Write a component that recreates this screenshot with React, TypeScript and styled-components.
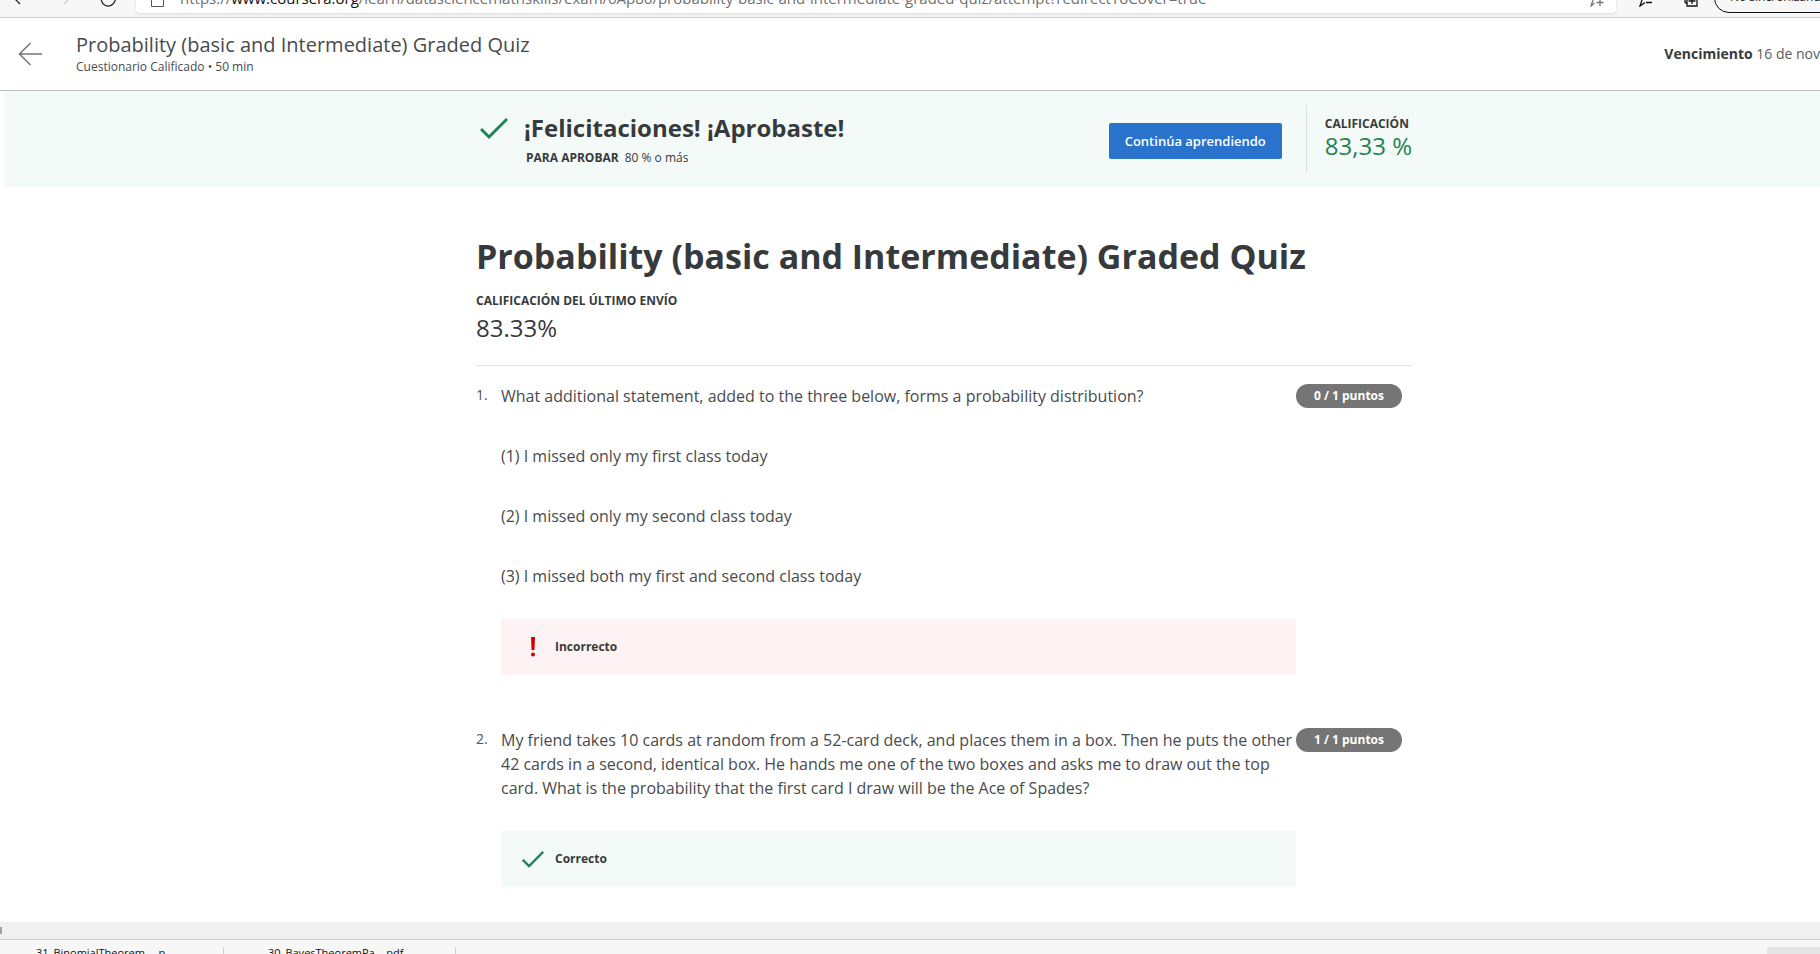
import React from "react";
import styled, { createGlobalStyle } from "styled-components";

const GlobalStyle = createGlobalStyle`
  *, *::before, *::after { box-sizing: border-box; }
  html, body, #root { height: 100%; }
  body {
    margin: 0;
    background: #fff;
    color: #373a3c;
    font-family: "Open Sans", "Noto Sans", sans-serif;
    font-size: 16px;
    overflow: hidden;
  }
  h1, h2, p, ol { margin: 0; padding: 0; }
  button { font: inherit; cursor: pointer; }
`;

const Shell = styled.div`
  display: flex;
  flex-direction: column;
  height: 100%;
  overflow: hidden;
`;

const BrowserBar = styled.div`
  flex: none;
  display: flex;
  align-items: flex-end;
  height: 18px;
  background: #f7f7f7;
  border-bottom: 1px solid #cfcfcf;
  overflow: hidden;
`;

const BrowserButtons = styled.div`
  flex: none;
  display: grid;
  grid-template-columns: 50px 38px auto;
  width: 136px;
  padding: 0 0 10px 12px;
`;

const BarButton = styled.button<{ $tone?: string }>`
  flex: none;
  display: flex;
  padding: 0;
  border: 0;
  background: none;
  color: ${(p) => p.$tone ?? "#222"};
`;

const Address = styled.div`
  flex: 1;
  display: flex;
  align-items: flex-end;
  gap: 16px;
  height: 34px;
  margin-bottom: 4px;
  padding: 0 12px 6px 15px;
  background: #fff;
  border-radius: 4px;
  box-shadow: 0 1px 3px rgba(0, 0, 0, 0.12);
  white-space: nowrap;
  color: #707070;
`;

const Url = styled.span`
  flex: 1;
  font-size: 15px;
  line-height: 18px;
  b { font-weight: 400; color: #111; }
`;

const BarActions = styled.div`
  flex: none;
  display: flex;
  align-items: flex-end;
  width: 204px;
  padding: 0 0 10px 22px;
  gap: 30px;
  overflow: hidden;
`;

const SyncButton = styled.button`
  flex: none;
  width: 160px;
  height: 30px;
  margin: 0 0 -6px -16px;
  padding: 0 0 2px 15px;
  border: 1px solid #111;
  border-radius: 15px;
  background: #f7f7f7;
  color: #222;
  text-align: left;
  font-size: 12px;
  line-height: 18px;
`;

const Header = styled.header`
  flex: none;
  display: flex;
  align-items: center;
  height: 73px;
  padding-left: 18px;
  border-bottom: 1px solid #bdbdbd;
`;

const BackLink = styled.a`
  display: flex;
  width: 58px;
  color: #757575;
`;

const HeaderTitles = styled.div`
  flex: 1;
  padding-top: 2px;
  color: #484b4d;
`;

const HeaderTitle = styled.p`
  font-size: 20px;
  line-height: 24px;
`;

const HeaderMeta = styled.p`
  font-size: 12px;
  line-height: 20px;
`;

const DueDate = styled.p`
  font-size: 14px;
  line-height: 20px;
  white-space: nowrap;
  color: #5a5c5e;
  b { color: #373a3c; }
`;

/* The quiz is centred on a page 64px wider than the visible area. */
const Banner = styled.section`
  flex: none;
  height: 96px;
  margin-left: 4px;
  padding-left: 64px;
  background: #f4faf8;
`;

const Column = styled.div`
  width: 100%;
  max-width: 936px;
  margin: 0 auto;
`;

const BannerRow = styled(Column)`
  display: flex;
  align-items: center;
  height: 96px;
`;

const BannerText = styled.div`
  flex: 1;
  display: grid;
  grid-template-columns: 44px 1fr;
  align-items: center;
  padding: 2px 0 0 4px;
`;

const BannerTitle = styled.h2`
  font-size: 24px;
  line-height: 36px;
`;

const BannerNote = styled.p`
  grid-column: 2;
  padding-left: 2px;
  font-size: 12px;
  line-height: 24px;
  b { margin-right: 6px; }
`;

const PrimaryButton = styled.button`
  height: 36px;
  padding: 0 16px;
  margin: 4px 24px 0 0;
  border: 0;
  border-radius: 2px;
  background: #2a73cc;
  color: #fff;
  font-size: 13px;
  font-weight: 600;
`;

const Grade = styled.div`
  display: flex;
  flex-direction: column;
  justify-content: center;
  height: 68px;
  padding: 0 0 6px 18px;
  border-left: 1px solid #dcdfde;
`;

const Label = styled.p`
  font-size: 12px;
  font-weight: 700;
  line-height: 18px;
`;

const GradeValue = styled.p`
  font-size: 24px;
  line-height: 25px;
  color: #1f8354;
`;

const Main = styled.main`
  flex: 1;
  min-height: 0;
  padding-left: 68px;
  overflow: hidden;
`;

const QuizTitle = styled.h1`
  padding-top: 47px;
  font-size: 34px;
  line-height: 44px;
`;

const LastGrade = styled.div`
  padding: 14px 0 19px;
  border-bottom: 1px solid #e1e1e1;
`;

const LastValue = styled.p`
  font-size: 24px;
  line-height: 36px;
`;

const Questions = styled.ol`
  list-style: none;
`;

const Question = styled.li`
  display: flex;
  align-items: flex-start;
  padding: 18px 10px 35px 0;
`;

const Num = styled.span`
  width: 25px;
  font-size: 14px;
  line-height: 22px;
  color: #505355;
`;

const Body = styled.div`
  flex: 1;
`;

const Prompt = styled.p`
  line-height: 24px;
  color: #484b4d;
  & + & { margin-top: 36px; }
`;

const Result = styled.div<{ $ok?: boolean }>`
  display: flex;
  align-items: center;
  gap: 11px;
  height: 56px;
  margin-top: 31px;
  padding: 0 0 1px 21px;
  background: ${(p) => (p.$ok ? "#f4faf8" : "#fef3f4")};
  font-size: 12px;
  font-weight: 700;
`;

const Points = styled.span`
  width: 106px;
  border-radius: 12px;
  background: #757575;
  color: #fff;
  text-align: center;
  font-size: 12px;
  font-weight: 700;
  line-height: 24px;
`;

const ScrollTrack = styled.div`
  flex: none;
  display: flex;
  align-items: center;
  height: 17px;
  background: #f0f0f0;
`;

const ScrollArrow = styled.span`
  width: 2px;
  height: 7px;
  background: #a0a0a0;
`;

const Downloads = styled.footer`
  flex: none;
  display: flex;
  align-items: flex-start;
  height: 15px;
  padding-top: 7px;
  border-top: 1px solid #cfcfcf;
  background: #f7f7f7;
  overflow: hidden;
`;

const Download = styled.button`
  flex: none;
  display: flex;
  width: 232px;
  height: 40px;
  padding: 0 0 0 44px;
  border: 0;
  border-right: 1px solid #cfcfcf;
  background: none;
  text-align: left;
  color: #111;
  font-size: 11px;
  line-height: 12px;
  &:first-child { width: 224px; padding-left: 36px; }
`;

const ShowMore = styled.button`
  width: 53px;
  height: 32px;
  margin-left: auto;
  border: 0;
  border-radius: 2px 0 0 0;
  background: #e5e5e5;
`;

function BarIcon({ d }: { d: string }) {
  return (
    <svg width="16" height="16" viewBox="0 0 16 16" fill="none" stroke="currentColor" strokeWidth="1.3" aria-hidden="true">
      <path d={d} />
    </svg>
  );
}

function Check({ size }: { size: number }) {
  return (
    <svg width={size} height={size} viewBox="0 0 28 28" fill="none" stroke="#1f8354" strokeWidth="3" aria-hidden="true">
      <path d="M1 15 L9 23 L27 5" />
    </svg>
  );
}

function Exclamation() {
  return (
    <svg width="22" height="22" viewBox="0 0 22 22" fill="#d30001" aria-hidden="true">
      <path d="M9 1H13L12.4 14H9.6Z" />
      <circle cx="11" cy="18.5" r="2" />
    </svg>
  );
}

export default function App() {
  return (
    <Shell>
      <GlobalStyle />
      <BrowserBar>
        <BrowserButtons>
          <BarButton aria-label="Atrás"><BarIcon d="M8 13L1 6L8 -1" /></BarButton>
          <BarButton aria-label="Adelante" $tone="#c8c8c8"><BarIcon d="M2 13L9 6L2 -1" /></BarButton>
          <BarButton aria-label="Actualizar"><BarIcon d="M14 4A7 7 0 1 1 8 1M14 0V4H10" /></BarButton>
        </BrowserButtons>
        <Address>
          <svg width="13" height="15" viewBox="0 0 13 15" fill="none" stroke="#555" aria-hidden="true"><path d="M.5 .5H12.5V14.5H.5Z" /></svg>
          <Url>https://<b>www.coursera.org</b>/learn/datasciencemathskills/exam/6Ap86/probability-basic-and-intermediate-graded-quiz/attempt?redirectToCover=true</Url>
          <BarButton aria-label="Agregar a favoritos" $tone="#777">
            <BarIcon d="M8 1L10 6L15 6L11 8.500M6.500 12L3 15L5 9L1 6L6 6L8 1M12 8V15M8.500 11.500H15.500" />
          </BarButton>
        </Address>
        <BarActions>
          <BarButton aria-label="Favoritos" $tone="#111"><BarIcon d="M8 1L10 6H15M8 1L6 6H1L4 9L2 15L7 11.500M8 11.500H14" /></BarButton>
          <BarButton aria-label="Colecciones" $tone="#111"><BarIcon d="M3 4H13V15H3ZM8 6V13M4.500 10H11.500M3 13L1 11V2H11" /></BarButton>
          <SyncButton>No sincronizando</SyncButton>
        </BarActions>
      </BrowserBar>
      <Header>
        <BackLink href="#" aria-label="Volver">
          <svg width="24" height="24" viewBox="0 0 24 24" fill="none" stroke="currentColor" strokeWidth="1.5" aria-hidden="true"><path d="M24 12H2M12.5 1L1.5 12L12.5 23" /></svg>
        </BackLink>
        <HeaderTitles>
          <HeaderTitle>Probability (basic and Intermediate) Graded Quiz</HeaderTitle>
          <HeaderMeta>Cuestionario Calificado • 50 min</HeaderMeta>
        </HeaderTitles>
        <DueDate><b>Vencimiento</b> 16 de nov</DueDate>
      </Header>
      <Banner>
        <BannerRow>
          <BannerText>
            <Check size={28} />
            <BannerTitle>¡Felicitaciones! ¡Aprobaste!</BannerTitle>
            <BannerNote><b>PARA APROBAR</b>80 % o más</BannerNote>
          </BannerText>
          <PrimaryButton>Continúa aprendiendo</PrimaryButton>
          <Grade>
            <Label>CALIFICACIÓN</Label>
            <GradeValue>83,33 %</GradeValue>
          </Grade>
        </BannerRow>
      </Banner>
      <Main>
        <Column>
          <QuizTitle>Probability (basic and Intermediate) Graded Quiz</QuizTitle>
          <LastGrade>
            <Label>CALIFICACIÓN DEL ÚLTIMO ENVÍO</Label>
            <LastValue>83.33%</LastValue>
          </LastGrade>
          <Questions>
            <Question>
              <Num>1.</Num>
              <Body>
                <Prompt>What additional statement, added to the three below, forms a probability distribution?</Prompt>
                <Prompt>(1) I missed only my first class today</Prompt>
                <Prompt>(2) I missed only my second class today</Prompt>
                <Prompt>(3) I missed both my first and second class today</Prompt>
                <Result><Exclamation />Incorrecto</Result>
              </Body>
              <Points>0 / 1 puntos</Points>
            </Question>
            <Question>
              <Num>2.</Num>
              <Body>
                <Prompt>My friend takes 10 cards at random from a 52-card deck, and places them in a box. Then he puts the other 42 cards in a second, identical box. He hands me one of the two boxes and asks me to draw out the top card. What is the probability that the first card I draw will be the Ace of Spades?</Prompt>
                <Result $ok><Check size={22} />Correcto</Result>
              </Body>
              <Points>1 / 1 puntos</Points>
            </Question>
          </Questions>
        </Column>
      </Main>
      <ScrollTrack><ScrollArrow /></ScrollTrack>
      <Downloads>
        <Download>31_BinomialTheorem_...p</Download>
        <Download>30_BayesTheoremPa....pdf</Download>
        <ShowMore aria-label="Mostrar todo" />
      </Downloads>
    </Shell>
  );
}
